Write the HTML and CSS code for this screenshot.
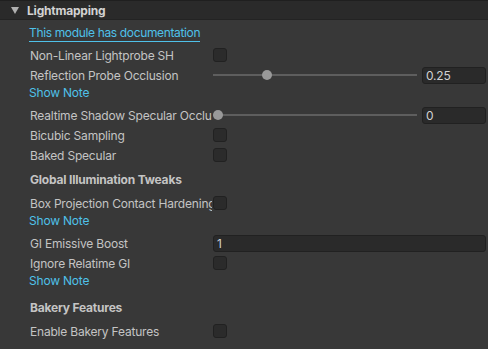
FILE: index.html
```html
<!DOCTYPE html>
<html lang="en">
<head>
    <meta charset="UTF-8">
    <meta name="viewport" content="width=device-width, initial-scale=1.0">
    <title>Lightmapping</title>
    <link rel="stylesheet" href="styles.css">
</head>
<body>

    <div class="foldout">
        <span class="arrow"></span>
        <span class="foldout-title">Lightmapping</span>
    </div>

    <section class="module">
        <div class="doc-row">
            <a class="doc-link" href="#">This module has documentation</a>
        </div>

        <div class="row">
            <span class="label">Non-Linear Lightprobe SH</span>
            <span class="checkbox"></span>
        </div>
        <div class="row">
            <span class="label">Reflection Probe Occlusion</span>
            <div class="slider">
                <div class="track">
                    <div class="knob-range"><span class="knob" style="left: 25%;"></span></div>
                </div>
                <div class="field small">0.25</div>
            </div>
        </div>
        <a class="note" href="#">Show Note</a>
        <div class="row">
            <span class="label">Realtime Shadow Specular Occlusion</span>
            <div class="slider">
                <div class="track">
                    <div class="knob-range"><span class="knob" style="left: 0%;"></span></div>
                </div>
                <div class="field small">0</div>
            </div>
        </div>
        <div class="row">
            <span class="label">Bicubic Sampling</span>
            <span class="checkbox"></span>
        </div>
        <div class="row">
            <span class="label">Baked Specular</span>
            <span class="checkbox"></span>
        </div>

        <h4 class="heading">Global Illumination Tweaks</h4>
        <div class="row">
            <span class="label">Box Projection Contact Hardening</span>
            <span class="checkbox"></span>
        </div>
        <a class="note" href="#">Show Note</a>
        <div class="row">
            <span class="label">GI Emissive Boost</span>
            <div class="field wide">1</div>
        </div>
        <div class="row">
            <span class="label">Ignore Relatime GI</span>
            <span class="checkbox"></span>
        </div>
        <a class="note" href="#">Show Note</a>

        <h4 class="heading">Bakery Features</h4>
        <div class="row">
            <span class="label">Enable Bakery Features</span>
            <span class="checkbox"></span>
        </div>
    </section>

</body>
</html>
```

FILE: styles.css
```css
body {
    margin: 0;
    padding: 0;
    background-color: #383838;
    color: #c4c4c4;
    font-family: Inter, "Noto Sans", sans-serif;
    font-size: 12px;
    letter-spacing: -0.2px;
    overflow: hidden;
}

.foldout {
    height: 20px;
    background-color: #2a2a2a;
    border-top: 1px solid #1f1f1f;
    border-bottom: 1px solid #232323;
    box-sizing: border-box;
    display: flex;
    align-items: center;
    padding-left: 11px;
}

.arrow {
    width: 0;
    height: 0;
    border-left: 4px solid transparent;
    border-right: 4px solid transparent;
    border-top: 7px solid #b0b0b0;
    margin-right: 8px;
}

.foldout-title {
    font-weight: bold;
    color: #d2d2d2;
}

.module {
    display: flex;
    flex-direction: column;
    padding: 0 2px 0 30px;
}

.doc-row {
    height: 25px;
    display: flex;
    align-items: center;
    margin-left: -1px;
}

.doc-link {
    color: #4fc1e9;
    text-decoration: none;
    border-bottom: 1px solid #4fc1e9;
    line-height: 14px;
    padding-bottom: 1px;
    margin-top: 2px;
    letter-spacing: -0.35px;
}

.row {
    height: 20px;
    display: flex;
    align-items: center;
}

.label {
    width: 182px;
    margin-right: 1px;
    flex-shrink: 0;
    white-space: nowrap;
    overflow: hidden;
}

.checkbox {
    width: 14px;
    height: 14px;
    box-sizing: border-box;
    background-color: #2b2b2b;
    border: 1px solid #212121;
    border-radius: 3px;
}

.slider {
    flex: 1;
    display: flex;
    align-items: center;
}

.track {
    position: relative;
    flex: 1;
    height: 2px;
    background-color: #5e5e5e;
    margin-right: 5px;
}

.knob-range {
    position: absolute;
    top: 0;
    bottom: 0;
    left: 5px;
    right: 5px;
}

.knob {
    position: absolute;
    top: -4px;
    width: 10px;
    height: 10px;
    margin-left: -5px;
    border-radius: 50%;
    background-color: #999999;
}

.field {
    height: 17px;
    box-sizing: border-box;
    background-color: #2a2a2a;
    border: 1px solid #212121;
    border-radius: 3px;
    color: #d2d2d2;
    padding-left: 3px;
    line-height: 15px;
}

.field.small {
    width: 64px;
}

.field.wide {
    flex: 1;
}

.note {
    height: 16px;
    line-height: 16px;
    color: #4fc1e9;
    text-decoration: none;
    margin-left: -1px;
    margin-bottom: 4px;
    align-self: flex-start;
}

.heading {
    height: 18px;
    line-height: 18px;
    margin: 6px 0 4px 0;
    font-size: 12px;
    font-weight: bold;
}
```
